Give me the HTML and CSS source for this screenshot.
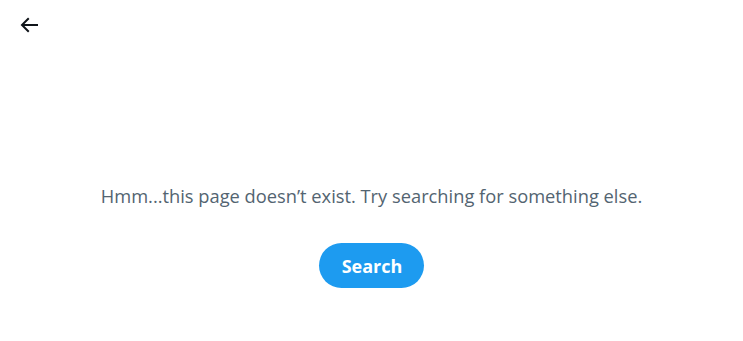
FILE: index.html
```html
<!DOCTYPE html>
<html lang="en">
<head>
<meta charset="utf-8">
<title>Page not found</title>
<link rel="stylesheet" href="styles.css">
</head>
<body>
<div class="page">
  <header class="topbar">
    <button class="back" aria-label="Back">
      <svg viewBox="0 0 24 24" width="24" height="24" aria-hidden="true"><path d="M7.414 13l5.043 5.04-1.414 1.42L3.586 12l7.457-7.46 1.414 1.42L7.414 11H21v2H7.414z"/></svg>
    </button>
  </header>
  <main class="empty">
    <p class="message">Hmm...this page doesn’t exist. Try searching for something else.</p>
    <button class="search-btn">Search</button>
  </main>
</div>
</body>
</html>
```
FILE: styles.css
```css
html, body {
  margin: 0;
  padding: 0;
  background: #ffffff;
}
body {
  font-family: "Open Sans", "Noto Sans", "Liberation Sans", sans-serif;
  color: #0f1419;
}
.page {
  display: flex;
  flex-direction: column;
  width: 743px;
  height: 341px;
}
.topbar {
  display: flex;
  align-items: center;
  height: 50px;
  padding: 0 0 0 13px;
  box-sizing: border-box;
}
.back {
  display: flex;
  align-items: center;
  justify-content: center;
  width: 32px;
  height: 32px;
  margin-top: 0;
  padding: 0;
  border: 0;
  background: transparent;
  cursor: pointer;
}
.back svg {
  fill: #0f1419;
  display: block;
}
.empty {
  display: flex;
  flex-direction: column;
  align-items: center;
  padding-top: 134px;
}
.message {
  margin: 0;
  font-size: 18.3px;
  line-height: 24px;
  color: #536471;
  font-weight: 400;
}
.search-btn {
  margin-top: 35px;
  height: 45px;
  padding: 0 22px 0 23px;
  border: 0;
  border-radius: 9999px;
  background: #1d9bf0;
  color: #ffffff;
  font-family: inherit;
  font-size: 18px;
  font-weight: 700;
  cursor: pointer;
}
```
